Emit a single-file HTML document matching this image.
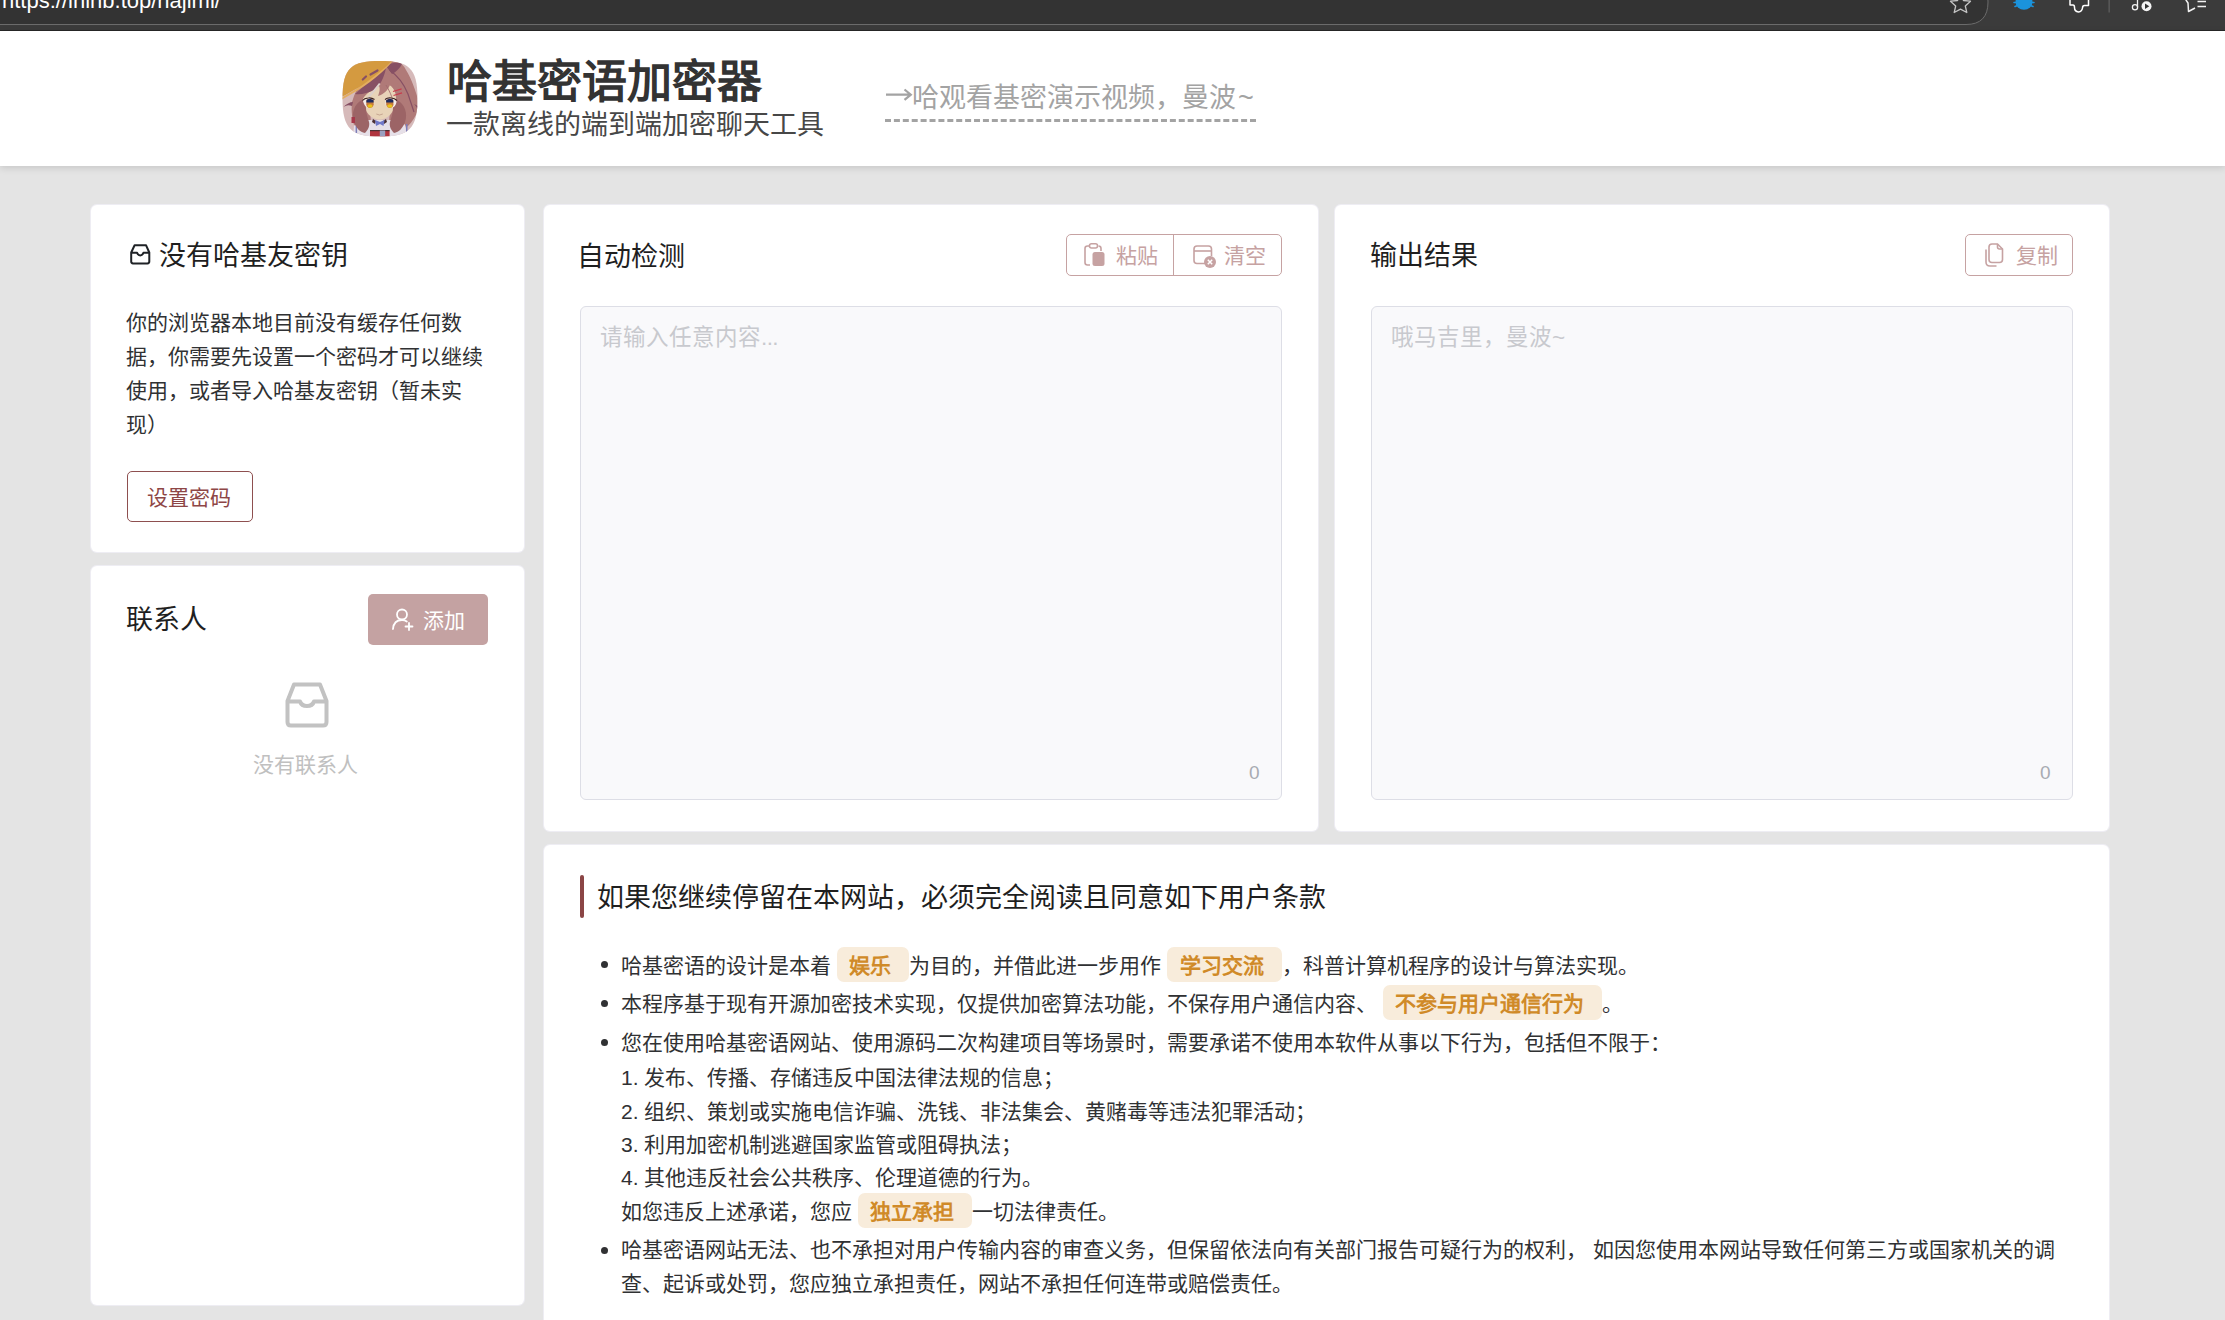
<!DOCTYPE html>
<html lang="zh-CN"><head><meta charset="utf-8">
<style>
*{box-sizing:border-box;margin:0;padding:0}
html,body{width:2225px;height:1320px;overflow:hidden}
body{background:#e4e4e4;font-family:"Liberation Sans",sans-serif;color:#303133;position:relative}
#chrome{position:absolute;left:0;top:0;width:2225px;height:31px;background:#333}
#chrome .l1{position:absolute;left:0;top:24px;width:1985px;height:1px;background:#686868}
#chrome .b2{position:absolute;left:0;top:25px;width:2225px;height:5px;background:#3b3b3b}
#chrome .b3{position:absolute;left:0;top:30px;width:2225px;height:1px;background:#2a2a2a}
#url{position:absolute;left:2px;top:-10px;font-size:22px;color:#fff;white-space:nowrap;line-height:1}
#header{position:absolute;left:0;top:31px;width:2225px;height:135px;background:#fff;box-shadow:0 2px 7px rgba(0,0,0,.13)}
.card{position:absolute;background:#fff;border-radius:6px;box-shadow:0 0 0 1px #eeedf3}
.t{position:absolute;white-space:nowrap;line-height:1}
.h{font-size:27px;color:#1f1f1f}
.p{font-size:21px;color:#303133}
.btn-o{position:absolute;border:1.5px solid #c6a2a2;border-radius:5px;background:#fff}
.ta{position:absolute;background:#f9f9fb;border:1.5px solid #dddee6;border-radius:6px}
.ph{font-size:22.5px;color:#c8c9ce}
.cnt{font-size:19px;color:#a8abb2}
.tag{display:inline;background:#f8ecdb;color:#d08a28;font-weight:bold;border-radius:7px;padding:7px 18px 5px 12.5px}
.li{font-size:21px;color:#303133}
.dot{position:absolute;width:7px;height:7px;border-radius:50%;background:#303133}
</style></head><body>
<div id="chrome">
  <svg style="position:absolute;left:0;top:0" width="2225" height="31" viewBox="0 0 2225 31">
    <rect x="0" y="0" width="2225" height="31" fill="#3b3b3b"/>
    <path d="M-10 -30 H1966 Q1988 -30 1988 2 Q1988 24.5 1966 24.5 H-10 Z" fill="#333" stroke="#6b6b6b" stroke-width="1"/>
    <rect x="0" y="30" width="2225" height="1" fill="#272727"/>
    <path d="M1960.5 -6 L1963.5 0.5 L1970.5 1.2 L1965.3 6 L1966.8 12.5 L1960.5 9.2 L1954.2 12.5 L1955.7 6 L1950.5 1.2 L1957.5 0.5 Z" fill="none" stroke="#c4c4c4" stroke-width="1.3" stroke-linejoin="round"/>
    <ellipse cx="2024" cy="2" rx="8.5" ry="7.8" fill="#1b93dc"/>
    <path d="M2014 2.5 L2017 2.5 M2031 2.5 L2034 2.5 M2015 6.5 L2017.5 5.5 M2033 6.5 L2030.5 5.5" stroke="#1b93dc" stroke-width="1.6" stroke-linecap="round"/>
    <path d="M2070 -2 V5 H2073 Q2074.5 5 2074.5 7.5 Q2074.5 11.5 2078.5 12 Q2082 11.5 2082.5 8 Q2082.5 5.5 2084.5 5.5 H2088.5 V-2" fill="none" stroke="#fff" stroke-width="1.5" stroke-linejoin="round"/>
    <rect x="2108.5" y="0" width="1.3" height="12.5" fill="#5e5e5e"/>
    <circle cx="2135" cy="7.3" r="2.6" fill="none" stroke="#f2f2f2" stroke-width="1.3"/>
    <path d="M2137.5 7 V-2" stroke="#f2f2f2" stroke-width="1.3"/>
    <circle cx="2146.5" cy="6.3" r="5" fill="#f5f5f5"/>
    <path d="M2145 3.5 L2149.3 6.3 L2145 9.1 Z" fill="#333"/>
    <path d="M2184 -3 L2188 3 L2188.5 11.5 L2195 8" fill="none" stroke="#f2f2f2" stroke-width="1.5" stroke-linejoin="round"/>
    <path d="M2197.5 1.5 H2206 M2197.5 6.5 H2206" stroke="#f2f2f2" stroke-width="1.6"/>
  </svg>
  <div id="url">https://ininb.top/hajimi/</div>
</div>
<div id="header"></div>

<!-- header content (page coords) -->
<svg class="t" style="left:342px;top:60px" width="76" height="77" viewBox="0 0 76 77">
  <defs><clipPath id="sq"><path d="M38 1 C66 1 75.5 7 75.5 38.5 C75.5 70 66 76.5 38 76.5 C10 76.5 0.5 70 0.5 38.5 C0.5 7 10 1 38 1 Z"/></clipPath></defs>
  <g clip-path="url(#sq)">
    <rect width="76" height="77" fill="#d6baba"/>
    <!-- hair mass -->
    <path d="M12 36 C16 26 24 16 34 10 C40 6 46 2 50 1 L56 2 C60 4 62 6 64 10 C68 16 72 26 75 36 L76 50 C74 56 70 62 66 66 L52 74 C48 68 46 62 48 54 L28 54 C30 62 28 68 24 74 L14 70 C10 62 9 50 10 42 Z" fill="#b07a78"/>
    <!-- dark hair lines -->
    <path d="M47.5 10 C56 16 62 24 66 34 C68 40 70 46 72 52" fill="none" stroke="#875064" stroke-width="1.2"/>
    <path d="M44 6 C50 2 56 2 60 4 C58 8 54 12 50 14 Z" fill="#875064"/>
    <path d="M72 44 C74 46 75 48 76 50 L76 46 Z" fill="#875064"/>
    <path d="M10 46 C6 44 3 46 1.5 47 C4 44 8 42 11 42 Z" fill="#875064"/>
    <!-- shirt -->
    <path d="M11 76 L12 66 C14 62 20 60 30 60 L46 60 C56 60 62 62 63.5 66 L64.5 76 Z" fill="#e6e0e8"/>
    <rect x="13.6" y="64" width="1.5" height="9" fill="#7c7db8"/>
    <rect x="64" y="64" width="1.5" height="9" fill="#7c7db8"/>
    <!-- face -->
    <path d="M21 38 C21 28 28 22 37.5 22 C47 22 54 28 54 38 C54 50 47 59.5 37.5 59.5 C28 59.5 21 50 21 38 Z" fill="#e8d3b8"/>
    <!-- bangs -->
    <path d="M19 42 C18 28 24 18 34 14 C42 12 50 14 54 20 C57 26 58 34 57 42 C55 34 52 28 48 25 C46 30 42 34 36 36 C38 31 38 28 37 26 C30 29 23 34 19 42 Z" fill="#b07a78"/>
    <path d="M44 25 C47 30 50 36 52 44" fill="none" stroke="#a06a6c" stroke-width="0.8"/>
    <!-- side curls -->
    <path d="M20 40 C12 44 9 54 12 62 C14 68 18 72 23 73 C26 70 28 66 27 62 C26 58 24 54 24 48 C24 44 22 41 20 40 Z" fill="#9c6466"/>
    <path d="M55 40 C63 44 66 54 63 62 C61 68 57 72 52 73 C49 70 47 66 48 62 C49 58 51 54 51 48 C51 44 53 41 55 40 Z" fill="#9c6466"/>
    <!-- collar/bow -->
    <path d="M31 59 L34 61 L33 64 L30 62 Z M44 59 L41 61 L42 64 L45 62 Z" fill="#4a2f33"/>
    <path d="M33 60 L38 62 L42.6 60 L41.5 66 L38 64 L34 66 Z" fill="#6f78c8"/>
    <rect x="9.5" y="57" width="3.5" height="6" fill="#a6384a"/>
    <!-- belt -->
    <rect x="28" y="70.5" width="19.6" height="6" fill="#b0343e"/>
    <rect x="28" y="70" width="19.6" height="1.2" fill="#4a2f33"/>
    <rect x="37.8" y="70.5" width="5.4" height="6" fill="#9aa0c0"/>
    <!-- eyes -->
    <path d="M21 41 C22 38.5 25 38 28 38.5 C31 39 32.5 41 32.2 44 C32 46.5 30 48 27.5 48 C24 48 22 45 21 41 Z" fill="#f4ece8"/>
    <path d="M24.5 40 C26 38.5 30 38.5 31.5 40.5 L31.8 44.5 C31.5 47 29.5 48 27.8 48 C25.8 48 24.5 46.5 24.3 44.5 Z" fill="#c77a3a"/>
    <path d="M24.5 40 C26 38.5 30 38.5 31.5 40.5 L31.7 42.5 L24.3 42.5 Z" fill="#1d2a5e"/>
    <ellipse cx="28" cy="46" rx="2.6" ry="1.8" fill="#e8c21c"/>
    <path d="M20.5 40.5 C23 37.5 29 37 32.5 39.5" fill="none" stroke="#3a2020" stroke-width="1.1"/>
    <path d="M43.5 39.5 C45 38 48 38 51 38.5 C53.5 39.5 54.8 41 54.5 42 C54 45 52 48 48.5 48 C45.5 48 43.6 46 43.5 44 Z" fill="#f4ece8"/>
    <path d="M44.2 40.5 C45.5 38.5 49.5 38.5 51.2 40 L51.5 44.5 C51.2 47 49.5 48 47.8 48 C45.8 48 44.5 46.5 44.2 44.5 Z" fill="#c77a3a"/>
    <path d="M44.2 40.5 C45.5 38.5 49.5 38.5 51.2 40 L51.4 42.5 L44.2 42.5 Z" fill="#1d2a5e"/>
    <ellipse cx="47.8" cy="46" rx="2.6" ry="1.8" fill="#e8c21c"/>
    <path d="M43 39.5 C46 37 52 37.5 55 40.5" fill="none" stroke="#3a2020" stroke-width="1.1"/>
    <path d="M34.3 54 Q37.5 56 40.8 54" fill="none" stroke="#b08a78" stroke-width="0.6"/>
    <!-- clip -->
    <path d="M51 31.5 L59.6 28.8 M51.5 35.5 L60 32.8" stroke="#c83c4c" stroke-width="1.3"/>
    <!-- dark hair under brim -->
    <path d="M13 34 C20 28 28 20 36 11 L44 8 C42 18 38 26 32 30 C26 33 19 35 13 34 Z" fill="#875064"/>
    <!-- white streak -->
    <path d="M37 23 C33 28 29 33 25 37.5 L28 37 C32 33 35 28 38.5 24 Z" fill="#ddd0cc"/>
    <!-- hat -->
    
    <path d="M-2 -2 H50 L49.6 1 C42 10 30 20 16 28 C10 31 5 34 -2 38 Z" fill="#d49a40"/>
    
    <path d="M0 37.5 C8 33 18 27 26 21 C34 15 42 9 49.6 1 L51 1 C44 9 36 16 28 22 C20 28 10 34 0 39.5 Z" fill="#e3ad5f"/>
    <path d="M20.8 19.5 L24 16.5 M28.5 14.5 L35.5 10.5" stroke="#875064" stroke-width="2.2" stroke-linecap="round"/>
  </g>
</svg>
<div class="t" style="left:447px;top:60px;font-size:45px;font-weight:bold;color:#333">哈基密语加密器</div>
<div class="t" style="left:446px;top:112px;font-size:27px;color:#474747">一款离线的端到端加密聊天工具</div>
<svg class="t" style="left:885px;top:88px" width="28" height="14" viewBox="0 0 28 14"><path d="M1 6.7 H25 M19.5 1.5 L25.8 6.7 L19.5 11.9" fill="none" stroke="#a3a3a3" stroke-width="2.2" stroke-linejoin="miter"/></svg>
<div class="t" style="left:912px;top:85px;font-size:27px;color:#a3a3a3">哈观看基密演示视频，曼波<span style="margin-left:2px">~</span></div>
<div style="position:absolute;left:885px;top:119px;width:371px;height:0;border-top:3px dashed #a3a3a3"></div>

<!-- cards -->
<div class="card" style="left:91px;top:205px;width:433px;height:347px"></div>
<div class="card" style="left:91px;top:566px;width:433px;height:739px"></div>
<div class="card" style="left:544px;top:205px;width:774px;height:626px"></div>
<div class="card" style="left:1335px;top:205px;width:774px;height:626px"></div>
<div class="card" style="left:544px;top:845px;width:1565px;height:520px"></div>

<!-- card 1 -->
<svg class="t" style="left:130px;top:244px" width="21" height="21" viewBox="0 0 21 21">
  <path d="M4.6 1.3 H16.1 L19.3 8.5 V17.6 Q19.3 19.4 17.5 19.4 H3 Q1.2 19.4 1.2 17.6 V8.5 Z M1.2 8.8 H7.1 Q8.1 11.4 10.25 11.4 Q12.4 11.4 13.4 8.8 H19.3" fill="none" stroke="#1f2226" stroke-width="2" stroke-linejoin="round"/>
</svg>
<div class="t h" style="left:159px;top:243px">没有哈基友密钥</div>
<div class="t p" style="left:126px;top:312px">你的浏览器本地目前没有缓存任何数</div>
<div class="t p" style="left:126px;top:346px">据，你需要先设置一个密码才可以继续</div>
<div class="t p" style="left:126px;top:380px">使用，或者导入哈基友密钥（暂未实</div>
<div class="t p" style="left:126px;top:414px">现）</div>
<div style="position:absolute;left:127px;top:471px;width:126px;height:51px;border:1.5px solid #8e4f4f;border-radius:5px"></div>
<div class="t" style="left:147px;top:487px;font-size:21px;color:#8e4646">设置密码</div>

<!-- card 2 -->
<div class="t h" style="left:126px;top:607px">联系人</div>
<div style="position:absolute;left:368px;top:594px;width:120px;height:51px;background:#c4a2a2;border-radius:5px"></div>
<svg class="t" style="left:391px;top:607px" width="24" height="24" viewBox="0 0 24 24">
  <circle cx="11" cy="7.5" r="5" fill="none" stroke="#fff" stroke-width="1.8"/>
  <path d="M2 22 C2.5 16 6 13 11 13 C13 13 14.5 13.5 15.8 14.5" fill="none" stroke="#fff" stroke-width="1.8" stroke-linecap="round"/>
  <path d="M18 16 V23 M14.5 19.5 H21.5" stroke="#fff" stroke-width="1.8" stroke-linecap="round"/>
</svg>
<div class="t" style="left:423px;top:610px;font-size:21px;color:#fff">添加</div>
<svg class="t" style="left:284px;top:682px" width="46" height="46" viewBox="0 0 46 46">
  <path d="M10 2.5 H36 L42.5 19 V40 Q42.5 43.5 39 43.5 H7 Q3.5 43.5 3.5 40 V19 Z M3.5 19.5 H16 Q17.5 24 23 24 Q28.5 24 30 19.5 H42.5" fill="none" stroke="#c2c2c2" stroke-width="4" stroke-linejoin="round"/>
</svg>
<div class="t" style="left:253px;top:754px;font-size:21px;color:#c0c0c0">没有联系人</div>

<!-- card 3 -->
<div class="t h" style="left:577px;top:244px">自动检测</div>
<div class="btn-o" style="left:1066px;top:234px;width:216px;height:42px"></div>
<div style="position:absolute;left:1173px;top:235px;width:1px;height:40px;background:#c6a2a2"></div>
<svg class="t" style="left:1083px;top:242px" width="24" height="26" viewBox="0 0 24 26">
  <path d="M6 4 H4.5 Q2 4 2 6.5 V20.5 Q2 23 4.5 23 H7" fill="none" stroke="#c6a2a2" stroke-width="1.6"/>
  <path d="M15.5 4 Q18 4 18 6.5 V9" fill="none" stroke="#c6a2a2" stroke-width="1.6"/>
  <rect x="6.5" y="1.8" width="8" height="4.2" rx="2" fill="none" stroke="#c6a2a2" stroke-width="1.6"/>
  <rect x="9.5" y="10" width="12" height="14" rx="2.5" fill="#c6a2a2"/>
</svg>
<div class="t" style="left:1116px;top:245px;font-size:21px;color:#c6a2a2">粘贴</div>
<svg class="t" style="left:1192px;top:244px" width="26" height="26" viewBox="0 0 26 26">
  <path d="M13 19.5 H5 Q2 19.5 2 16.5 V5 Q2 2 5 2 H16.5 Q19.5 2 19.5 5 V12" fill="none" stroke="#c6a2a2" stroke-width="1.6"/>
  <path d="M2 7 H19.5" stroke="#c6a2a2" stroke-width="1.6"/>
  <circle cx="18" cy="18" r="6" fill="#c6a2a2"/>
  <path d="M15.8 15.8 L20.2 20.2 M20.2 15.8 L15.8 20.2" stroke="#fff" stroke-width="1.5"/>
</svg>
<div class="t" style="left:1224px;top:245px;font-size:21px;color:#c6a2a2">清空</div>
<div class="ta" style="left:580px;top:306px;width:702px;height:494px"></div>
<div class="t ph" style="left:600px;top:327px">请输入任意内容<span style="letter-spacing:-0.6px">...</span></div>
<div class="t cnt" style="left:1249px;top:763px">0</div>

<!-- card 4 -->
<div class="t h" style="left:1370px;top:243px">输出结果</div>
<div class="btn-o" style="left:1965px;top:234px;width:108px;height:42px"></div>
<svg class="t" style="left:1984px;top:242px" width="22" height="26" viewBox="0 0 22 26">
  <path d="M8 2 H13.5 L18.5 7 V17.5 Q18.5 20.5 15.5 20.5 H8 Q5 20.5 5 17.5 V5 Q5 2 8 2 Z" fill="none" stroke="#c6a2a2" stroke-width="1.6"/>
  <path d="M13.5 2 V5 Q13.5 7 15.5 7 H18.5" fill="none" stroke="#c6a2a2" stroke-width="1.6"/>
  <path d="M2 7.5 V20 Q2 24 6 24 H12.5" fill="none" stroke="#c6a2a2" stroke-width="1.6"/>
</svg>
<div class="t" style="left:2016px;top:245px;font-size:21px;color:#c6a2a2">复制</div>
<div class="ta" style="left:1371px;top:306px;width:702px;height:494px"></div>
<div class="t ph" style="left:1391px;top:327px">哦马吉里，曼波~</div>
<div class="t cnt" style="left:2040px;top:763px">0</div>

<!-- card 5 -->
<div style="position:absolute;left:580px;top:875px;width:4px;height:43px;background:#8b4545;border-radius:2px"></div>
<div class="t h" style="left:597px;top:885px">如果您继续停留在本网站，必须完全阅读且同意如下用户条款</div>
<div class="dot" style="left:601px;top:961px"></div>
<div class="t li" style="left:621px;top:955px">哈基密语的设计是本着 <span class="tag">娱乐</span>为目的，并借此进一步用作 <span class="tag">学习交流</span>，科普计算机程序的设计与算法实现。</div>
<div class="dot" style="left:601px;top:1000px"></div>
<div class="t li" style="left:621px;top:993px">本程序基于现有开源加密技术实现，仅提供加密算法功能，不保存用户通信内容、 <span class="tag">不参与用户通信行为</span>。</div>
<div class="dot" style="left:601px;top:1039px"></div>
<div class="t li" style="left:621px;top:1032px">您在使用哈基密语网站、使用源码二次构建项目等场景时，需要承诺不使用本软件从事以下行为，包括但不限于：</div>
<div class="t li" style="left:621px;top:1067px">1. 发布、传播、存储违反中国法律法规的信息；</div>
<div class="t li" style="left:621px;top:1101px">2. 组织、策划或实施电信诈骗、洗钱、非法集会、黄赌毒等违法犯罪活动；</div>
<div class="t li" style="left:621px;top:1134px">3. 利用加密机制逃避国家监管或阻碍执法；</div>
<div class="t li" style="left:621px;top:1167px">4. 其他违反社会公共秩序、伦理道德的行为。</div>
<div class="t li" style="left:621px;top:1201px">如您违反上述承诺，您应 <span class="tag">独立承担</span>一切法律责任。</div>
<div class="dot" style="left:601px;top:1247px"></div>
<div class="t li" style="left:621px;top:1239px">哈基密语网站无法、也不承担对用户传输内容的审查义务，但保留依法向有关部门报告可疑行为的权利， 如因您使用本网站导致任何第三方或国家机关的调</div>
<div class="t li" style="left:621px;top:1273px">查、起诉或处罚，您应独立承担责任，网站不承担任何连带或赔偿责任。</div>
</body></html>
